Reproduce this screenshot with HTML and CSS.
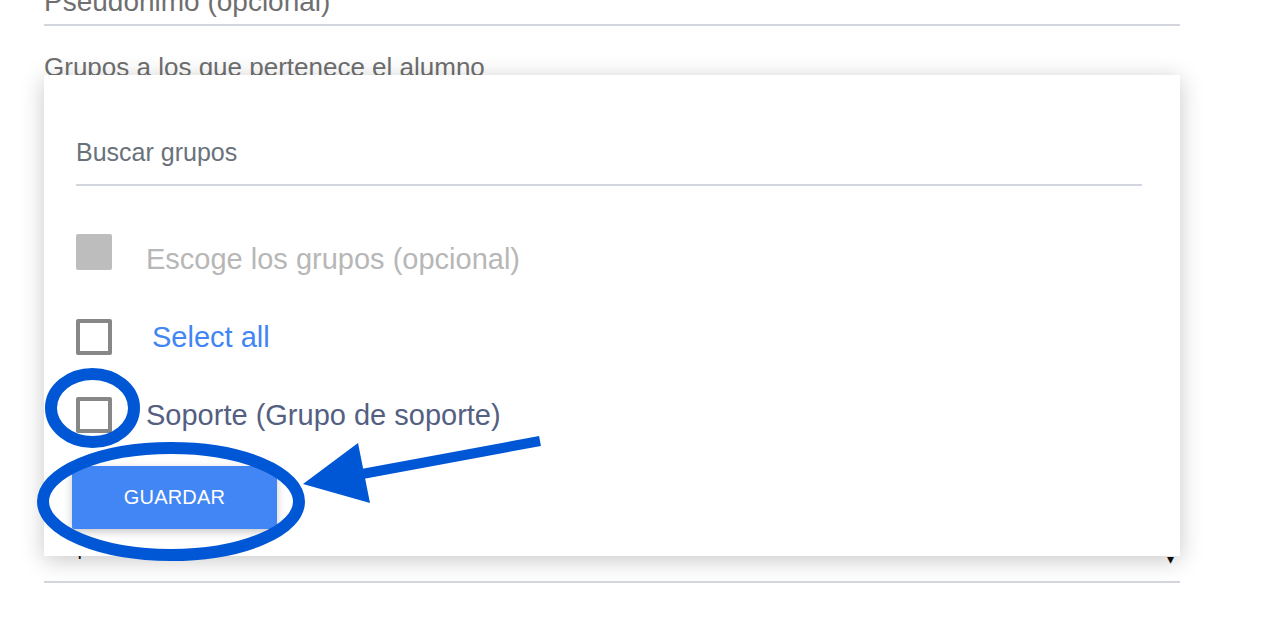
FILE: index.html
```html
<!DOCTYPE html>
<html lang="es">
<head>
<meta charset="utf-8">
<title>Alumno</title>
<link rel="stylesheet" href="styles.css">
</head>
<body>
<div class="page">
  <div class="form">
    <div class="field field-pseudo">Pseudónimo (opcional)</div>
    <div class="label-groups">Grupos a los que pertenece el alumno</div>
    <div class="groups-trigger"></div>
    <div class="select-field">
      <span class="select-text">Opciones</span>
      <span class="select-caret">▾</span>
    </div>

    <div class="dropdown">
      <div class="search">Buscar grupos</div>
      <div class="option option-first">
        <span class="box box-disabled"></span>
        <span class="opt-text opt-muted">Escoge los grupos (opcional)</span>
      </div>
      <div class="option option-all">
        <span class="box"></span>
        <span class="opt-text opt-link">Select all</span>
      </div>
      <div class="option option-item">
        <span class="box"></span>
        <span class="opt-text opt-group">Soporte (Grupo de soporte)</span>
      </div>
      <button class="btn-save">GUARDAR</button>
    </div>
  </div>

  <svg class="annotations" width="1263" height="635" viewBox="0 0 1263 635" aria-hidden="true">
    <ellipse cx="92.5" cy="408" rx="41.5" ry="34" fill="none" stroke="#0057d6" stroke-width="12"/>
    <ellipse cx="171" cy="501.5" rx="128" ry="53.5" fill="none" stroke="#0057d6" stroke-width="12"/>
    <line x1="540" y1="441" x2="362" y2="474" stroke="#0057d6" stroke-width="10"/>
    <polygon points="303,484 358,443 370,503" fill="#0057d6"/>
  </svg>
</div>
</body>
</html>
```
FILE: styles.css
```css
html, body {
  margin: 0;
  padding: 0;
  background: #ffffff;
  overflow: hidden;
}

body {
  font-family: "Liberation Sans", Arial, sans-serif;
  width: 1263px;
  height: 635px;
}

.page {
  position: relative;
  width: 1263px;
  height: 635px;
  overflow: hidden;
}

.form {
  display: flow-root;
  position: relative;
  margin-left: 44px;
  width: 1136px;
}

.field-pseudo {
  margin-top: -14px;
  font-size: 28px;
  line-height: 32px;
  color: #6f6f6f;
  padding-bottom: 6px;
  border-bottom: 2px solid #d3d6de;
}

.label-groups {
  margin-top: 26px;
  font-size: 26px;
  line-height: 30px;
  color: #6f6f6f;
}

.groups-trigger {
  height: 454px;
}

.select-field {
  display: flex;
  justify-content: space-between;
  align-items: flex-start;
  height: 45px;
  padding: 0 6px 0 18px;
  font-size: 20px;
  line-height: 24px;
  color: #111;
  border-bottom: 2px solid #d3d6de;
}

.select-caret {
  margin-top: 18px;
  font-size: 14px;
  line-height: 10px;
  color: #111;
}

.dropdown {
  position: absolute;
  left: 0;
  top: 75px;
  width: 1136px;
  height: 481px;
  box-sizing: border-box;
  padding: 62px 38px 0 32px;
  background: #ffffff;
  box-shadow: 0 4px 22px rgba(0, 0, 0, 0.22);
  display: flex;
  flex-direction: column;
  align-items: flex-start;
}

.search {
  align-self: stretch;
  font-size: 25px;
  line-height: 30px;
  color: #69727b;
  padding-bottom: 17px;
  border-bottom: 2px solid #d3d6de;
}

.option {
  display: flex;
  align-items: center;
  height: 36px;
}

.option-first { margin-top: 48px; }
.option-all { margin-top: 49px; }
.option-item { margin-top: 42px; }

.box {
  width: 36px;
  height: 36px;
  box-sizing: border-box;
  border: 4px solid #878787;
  border-radius: 2px;
  background: #fff;
  flex: none;
}

.box-disabled {
  border-color: #bdbdbd;
  background: #bdbdbd;
}

.opt-text {
  font-size: 29px;
  line-height: 34px;
  white-space: nowrap;
}

.opt-muted {
  margin-left: 34px;
  padding-top: 14px;
  color: #b7b7b7;
}

.opt-link {
  margin-left: 40px;
  color: #4285f4;
}

.opt-group {
  margin-left: 34px;
  color: #545f82;
}

.btn-save {
  margin-top: 33px;
  margin-left: -4px;
  width: 205px;
  height: 63px;
  border: none;
  border-radius: 2px;
  background: #4285f4;
  color: #ffffff;
  font-family: "Liberation Sans", Arial, sans-serif;
  font-size: 20px;
  letter-spacing: 0.2px;
  box-shadow: 0 3px 8px rgba(0, 0, 0, 0.22);
  cursor: pointer;
}

.annotations {
  position: absolute;
  left: 0;
  top: 0;
  pointer-events: none;
}
```
